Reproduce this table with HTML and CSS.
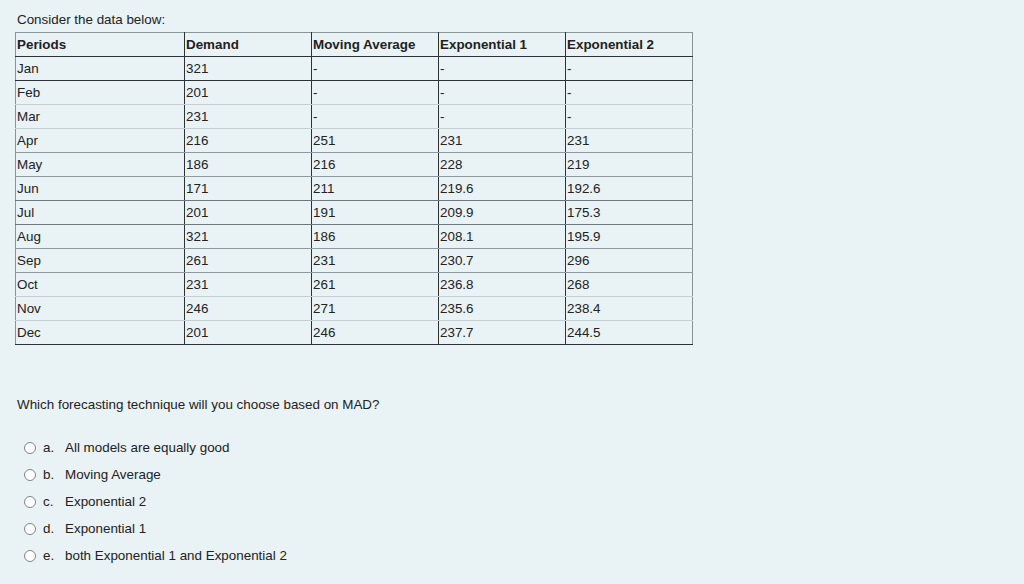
FILE: index.html
```html
<!DOCTYPE html>
<html>
<head>
<meta charset="utf-8">
<link rel="stylesheet" href="styles.css">
</head>
<body>
<div class="page">
  <p class="intro">Consider the data below:</p>
  <table class="data">
    <colgroup><col class="c1"><col class="c2"><col class="c2"><col class="c2"><col class="c2"></colgroup>
    <thead>
      <tr><th>Periods</th><th>Demand</th><th>Moving Average</th><th>Exponential 1</th><th>Exponential 2</th></tr>
    </thead>
    <tbody>
      <tr class="dark"><td>Jan</td><td>321</td><td>-</td><td>-</td><td>-</td></tr>
      <tr class="light"><td>Feb</td><td>201</td><td>-</td><td>-</td><td>-</td></tr>
      <tr class="light"><td>Mar</td><td>231</td><td>-</td><td>-</td><td>-</td></tr>
      <tr class="mid"><td>Apr</td><td>216</td><td>251</td><td>231</td><td>231</td></tr>
      <tr class="mid"><td>May</td><td>186</td><td>216</td><td>228</td><td>219</td></tr>
      <tr class="mdark"><td>Jun</td><td>171</td><td>211</td><td>219.6</td><td>192.6</td></tr>
      <tr class="mdark"><td>Jul</td><td>201</td><td>191</td><td>209.9</td><td>175.3</td></tr>
      <tr class="mid"><td>Aug</td><td>321</td><td>186</td><td>208.1</td><td>195.9</td></tr>
      <tr class="mid"><td>Sep</td><td>261</td><td>231</td><td>230.7</td><td>296</td></tr>
      <tr class="light"><td>Oct</td><td>231</td><td>261</td><td>236.8</td><td>268</td></tr>
      <tr class="light"><td>Nov</td><td>246</td><td>271</td><td>235.6</td><td>238.4</td></tr>
      <tr><td>Dec</td><td>201</td><td>246</td><td>237.7</td><td>244.5</td></tr>
    </tbody>
  </table>
  <p class="question">Which forecasting technique will you choose based on MAD?</p>
  <ul class="options">
    <li><span class="radio"></span><span class="letter">a.</span><span>All models are equally good</span></li>
    <li><span class="radio"></span><span class="letter">b.</span><span>Moving Average</span></li>
    <li><span class="radio"></span><span class="letter">c.</span><span>Exponential 2</span></li>
    <li><span class="radio"></span><span class="letter">d.</span><span>Exponential 1</span></li>
    <li><span class="radio"></span><span class="letter">e.</span><span>both Exponential 1 and Exponential 2</span></li>
  </ul>
</div>
</body>
</html>
```
FILE: styles.css
```css
html, body {
  margin: 0;
  padding: 0;
  background: #e9f2f5;
}
body {
  font-family: "Liberation Sans", Arial, sans-serif;
  font-size: 13.4px;
  color: #222;
  width: 1024px;
  height: 584px;
  overflow: hidden;
}
.page {
  padding: 12px 0 0 15px;
}
.intro {
  margin: 0 0 4px 2px;
  line-height: 16px;
}
.data {
  border-collapse: collapse;
  width: 678px;
  border: 1px solid #8a9597;
  border-bottom: 1px solid #2b3336;
}
.data .c1 { width: 169px; }
.data .c2 { width: 127px; }
.data th, .data td {
  height: 23px;
  padding: 0 0 0 1px;
  text-align: left;
  vertical-align: middle;
  line-height: 16px;
  border-left: 1px solid #2b3336;
  border-bottom: 1px solid #c3cdd0;
}
.data th:first-child, .data td:first-child {
  border-left: 1px solid #8a9597;
}
.data th {
  font-weight: bold;
  border-bottom: 1px solid #2b3336;
}
.data tr.dark td { border-bottom-color: #2b3336; }
.data tr.light td { border-bottom-color: #c6d0d3; }
.data tr.mid td { border-bottom-color: #8e9a9d; }
.data tr.mdark td { border-bottom-color: #6c787b; }
.data tbody tr:last-child td { border-bottom-color: #2b3336; }
.question {
  margin: 52px 0 0 2px;
  line-height: 16px;
}
.options {
  list-style: none;
  margin: 27px 0 0 9px;
  padding: 0;
  display: flex;
  flex-direction: column;
  gap: 11px;
}
.options li {
  display: flex;
  align-items: center;
  height: 16px;
  line-height: 16px;
}
.radio {
  width: 10px;
  height: 10px;
  border: 1px solid #7d8588;
  border-radius: 50%;
  background: #fff;
  margin-right: 7px;
  flex: none;
}
.letter {
  width: 22px;
  flex: none;
}
```
